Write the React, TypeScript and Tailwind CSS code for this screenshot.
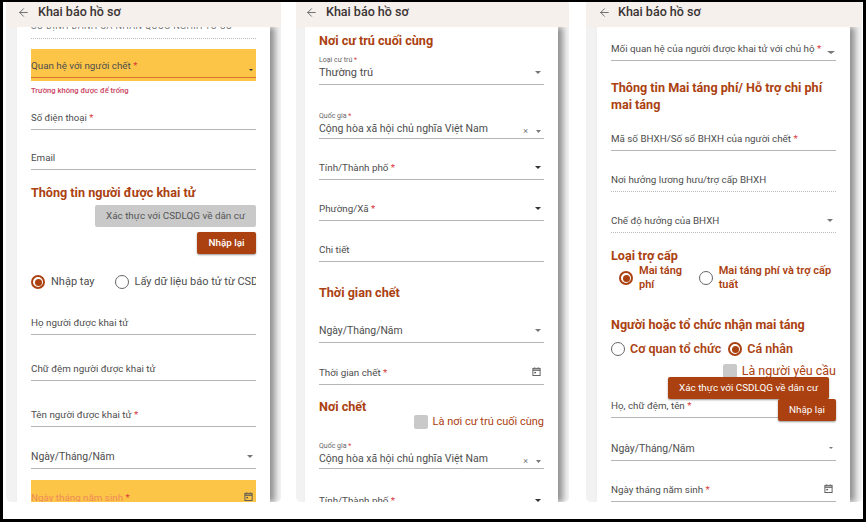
import { ArrowLeft } from 'lucide-react';
import type { ReactNode } from 'react';

const BRICK = 'text-[#ab4110]';
const LABEL = 'text-[#4d4d4d]';

function Star() {
  return <span className="text-[#d93a3a]"> *</span>;
}

function Caret({ dark = false, className = 'w-[6px] h-[3px] mb-[5px]' }: { dark?: boolean; className?: string }) {
  return (
    <svg viewBox="0 0 8 4" preserveAspectRatio="none" className={`${className} shrink-0`}>
      <path d="M0 0h8L4 4z" fill={dark ? '#333333' : '#777777'} />
    </svg>
  );
}

function CalendarIcon() {
  return (
    <svg viewBox="0 0 10 10" className="w-[9px] h-[9px] mb-[3px] shrink-0" fill="none" stroke="#555555">
      <rect x="1" y="1.5" width="8" height="8" strokeWidth="1" />
      <path d="M1 3.5h8" strokeWidth="1.4" />
      <path d="M3 0.5v1M7 0.5v1" strokeWidth="1" />
      <path d="M2.5 5.5h2v1.5h-2z" fill="#555555" strokeWidth="0" />
    </svg>
  );
}

function Field({
  children,
  small,
  right,
  top,
  height,
  dotted,
  filled,
  line,
  pad = 'pb-[5px]',
  textClass = 'text-[9.8px]',
}: {
  children: ReactNode;
  small?: ReactNode;
  right?: ReactNode;
  top: string;
  height: string;
  dotted?: boolean;
  filled?: boolean;
  line?: string;
  pad?: string;
  textClass?: string;
}) {
  return (
    <div
      className={`${top} ${height} ${pad} flex items-end justify-between pr-[3px] shrink-0 border-b ${
        dotted ? 'border-dotted border-[#bbbbbb]' : line ?? 'border-[#b5b5b5]'
      } ${filled ? 'bg-[#fdc548]' : ''}`}
    >
      <div className={`${textClass} ${LABEL} leading-[13px] whitespace-nowrap`}>
        {small && <div className="text-[7px] leading-[8px] mb-[2px] text-[#666666]">{small}</div>}
        {children}
      </div>
      {right}
    </div>
  );
}

function Radio({ on }: { on?: boolean }) {
  return (
    <span
      className={`w-[14px] h-[14px] rounded-full border shrink-0 flex items-center justify-center ${
        on ? 'border-[#ab4110] border-2' : 'border-[#666666]'
      }`}
    >
      {on && <span className="w-[7px] h-[7px] rounded-full bg-[#ab4110]" />}
    </span>
  );
}

function Heading({ children, top = '' }: { children: ReactNode; top?: string }) {
  return <h2 className={`${top} text-[12.6px] leading-[17px] font-bold ${BRICK} shrink-0`}>{children}</h2>;
}

function Panel({
  children,
  left,
  width,
  cardMargin,
  headerPad,
  headerGap,
}: {
  children: ReactNode;
  left: string;
  width: string;
  cardMargin: string;
  headerPad: string;
  headerGap: string;
}) {
  return (
    <section className={`${left} ${width} h-[500px] shrink-0 flex flex-col rounded-b-[5px] overflow-hidden bg-[#f2f2f2]`}>
      <header className={`${headerPad} ${headerGap} h-[25px] shrink-0 bg-[#f5f0ec] flex items-center pb-[4px] relative z-10`}>
        <ArrowLeft className="w-[13px] h-[13px] text-[#555555]" strokeWidth={1.5} />
        <span className="text-[12.5px] font-medium text-[#3a3333]">Khai báo hồ sơ</span>
      </header>
      <div className={`${cardMargin} flex-1 min-h-0 bg-white px-[14px] flex flex-col overflow-hidden shadow-[5px_0_6px_rgba(0,0,0,0.4)]`}>
        {children}
      </div>
    </section>
  );
}

function FirstPanel() {
  return (
    <Panel left="ml-[3px]" width="w-[275px]" cardMargin="mx-[11px]" headerPad="pl-[11px]" headerGap="gap-[8px]">
      <div className="h-[18px] -mt-[6px] shrink-0 border-b border-dotted border-[#bbbbbb] text-[9px] tracking-[0.4px] leading-[10px] text-[#777777] whitespace-nowrap overflow-hidden">
        SỐ ĐỊNH DANH CÁ NHÂN QUỐC NGHĨA TỬ SỐ
      </div>
      <div className="mt-[10px] pb-[3px] bg-[#fdc548] shrink-0">
        <Field
          top="mt-0"
          height="h-[29px]"
          line="border-[#d9742c]"
          right={<Caret className="w-[4px] h-[2px] mb-[1px]" dark />}
        >
          Quan hệ với người chết<Star />
        </Field>
      </div>
      <p className="mt-[5px] text-[7.6px] leading-[9px] font-medium text-[#c9405c] shrink-0">Trường không được để trống</p>
      <Field top="mt-[1px]" height="h-[34px]" textClass="text-[9.6px]">Số điện thoại<Star /></Field>
      <Field top="mt-[8px]" height="h-[32px]">Email</Field>
      <Heading top="mt-[14px]">Thông tin người được khai tử</Heading>
      <div className="mt-[4px] flex flex-col items-end gap-[5px] shrink-0">
        <button className="w-[161px] h-[22px] rounded-[2px] bg-[#c9c9c9] text-[9.9px] text-[#555555]">Xác thực với CSDLQG về dân cư</button>
        <button className="w-[59px] h-[22px] rounded-[2px] bg-[#ab4110] text-[9.9px] font-medium text-white shadow-[0_1px_2px_rgba(0,0,0,0.4)]">Nhập lại</button>
      </div>
      <div className="mt-[21px] flex items-center text-[11px] leading-[14px] text-[#4d4d4d] whitespace-nowrap overflow-hidden shrink-0">
        <Radio on />
        <span className="ml-[6px]">Nhập tay</span>
        <span className="ml-[20px]"><Radio /></span>
        <span className="ml-[6px]">Lấy dữ liệu báo tử từ CSDLHT</span>
      </div>
      <Field top="mt-[11px]" height="h-[35px]">Họ người được khai tử</Field>
      <Field top="mt-[10px]" height="h-[36px]">Chữ đệm người được khai tử</Field>
      <Field top="mt-[10px]" height="h-[36px]">Tên người được khai tử<Star /></Field>
      <Field top="mt-[8px]" height="h-[34px]" textClass="text-[10.4px]" right={<Caret />}>Ngày/Tháng/Năm</Field>
      <Field top="mt-[11px]" height="h-[30px]" filled line="border-[#d9742c]" right={<CalendarIcon />}>
        <span className="text-[#ef8a5a]">Ngày tháng năm sinh</span><Star />
      </Field>
    </Panel>
  );
}

function SecondPanel() {
  const clearAndCaret = (
    <div className="flex items-end gap-[8px] text-[9px] leading-[8px] text-[#777777]">
      <span>×</span>
      <Caret className="w-[5px] h-[3px] mb-[2px]" />
    </div>
  );
  return (
    <Panel left="ml-[15px]" width="w-[273px]" cardMargin="ml-[9px] mr-[11px]" headerPad="pl-[9px]" headerGap="gap-[8px]">
      <Heading top="mt-[5px]">Nơi cư trú cuối cùng</Heading>
      <Field top="mt-[6px]" height="h-[30px]" textClass="text-[11px]" small={<>Loại cư trú<Star /></>} right={<Caret />}>Thường trú</Field>
      <Field top="mt-[26px]" height="h-[28px]" pad="pb-[3px]" textClass="text-[10.5px]" small={<>Quốc gia<Star /></>} right={clearAndCaret}>Cộng hòa xã hội chủ nghĩa Việt Nam</Field>
      <Field top="mt-[12px]" height="h-[29px]" right={<Caret dark />}>Tính/Thành phố<Star /></Field>
      <Field top="mt-[12px]" height="h-[29px]" right={<Caret dark />}>Phường/Xã<Star /></Field>
      <Field top="mt-[12px]" height="h-[29px]">Chi tiết</Field>
      <Heading top="mt-[22px]">Thời gian chết</Heading>
      <Field top="mt-[12px]" height="h-[30px]" textClass="text-[10.4px]" right={<Caret />}>Ngày/Tháng/Năm</Field>
      <Field top="mt-[12px]" height="h-[30px]" right={<CalendarIcon />}>Thời gian chết<Star /></Field>
      <Heading top="mt-[13px]">Nơi chết</Heading>
      <div className="h-[14px] flex justify-end items-center gap-[5px] text-[11px] text-[#ab4110] shrink-0">
        <span className="w-[14px] h-[14px] rounded-[2px] bg-[#c9c9c9]" />
        Là nơi cư trú cuối cùng
      </div>
      <Field top="mt-[12px]" height="h-[28px]" pad="pb-[3px]" textClass="text-[10.5px]" small={<>Quốc gia<Star /></>} right={clearAndCaret}>Cộng hòa xã hội chủ nghĩa Việt Nam</Field>
      <div className="mt-[25px] flex justify-between pr-[3px] items-center text-[9.8px] text-[#4d4d4d] leading-[13px] shrink-0">
        <span>Tính/Thành phố<Star /></span>
        <Caret dark className="w-[6px] h-[3px]" />
      </div>
    </Panel>
  );
}

function ThirdPanel() {
  return (
    <Panel left="ml-[17px]" width="w-[276px]" cardMargin="ml-[11px] mr-[12px]" headerPad="pl-[12px]" headerGap="gap-[7px]">
      <Field top="mt-[6px]" height="h-[28px]" right={<Caret className="w-[8px] h-[3px] mb-[1px] -mr-[2px]" />}>Mối quan hệ của người được khai tử với chủ hộ<Star /></Field>
      <Heading top="mt-[18px]">Thông tin Mai táng phí/ Hỗ trợ chi phí mai táng</Heading>
      <Field top="mt-[8px]" height="h-[30px]">Mã số BHXH/Số sổ BHXH của người chết<Star /></Field>
      <Field top="mt-[11px]" height="h-[30px]" dotted>Nơi hưởng lương hưu/trợ cấp BHXH</Field>
      <Field top="mt-[11px]" height="h-[30px]" dotted right={<Caret />}>Chế độ hưởng của BHXH</Field>
      <Heading top="mt-[14px]">Loại trợ cấp</Heading>
      <div className={`flex items-center text-[11px] font-semibold leading-[14px] ${BRICK} shrink-0 pl-[8px]`}>
        <Radio on />
        <span className="ml-[6px] w-[60px]">Mai táng phí</span>
        <Radio />
        <span className="ml-[6px] w-[118px]">Mai táng phí và trợ cấp tuất</span>
      </div>
      <Heading top="mt-[24px]">Người hoặc tổ chức nhận mai táng</Heading>
      <div className={`mt-[9px] flex items-center text-[12.5px] leading-[14px] font-semibold ${BRICK} shrink-0`}>
        <Radio />
        <span className="ml-[5px]">Cơ quan tổ chức</span>
        <span className="ml-[7px]"><Radio on /></span>
        <span className="ml-[5px]">Cá nhân</span>
      </div>
      <div className="mt-[8px] flex justify-end items-center gap-[5px] text-[12.5px] text-[#ab4110] shrink-0 leading-[14px]">
        <span className="w-[14px] h-[14px] rounded-[2px] bg-[#c9c9c9]" />
        Là người yêu cầu
      </div>
      <div className="relative shrink-0">
        <button className="absolute right-[7px] top-[-1px] z-10 w-[161px] h-[22px] rounded-[2px] bg-[#ab4110] text-[9.9px] text-white shadow-[0_1px_2px_rgba(0,0,0,0.4)]">Xác thực với CSDLQG về dân cư</button>
        <button className="absolute right-0 top-[21px] z-10 w-[58px] h-[22px] rounded-[2px] bg-[#ab4110] text-[9.9px] text-white shadow-[0_1px_2px_rgba(0,0,0,0.4)]">Nhập lại</button>
        <Field top="mt-0" height="h-[40px]">Họ, chữ đệm, tên<Star /></Field>
      </div>
      <Field top="mt-[13px]" height="h-[30px]" textClass="text-[10.4px]" right={<Caret className="w-[4px] h-[2px] mb-[6px]" />}>Ngày/Tháng/Năm</Field>
      <Field top="mt-[11px]" height="h-[30px]" right={<CalendarIcon />}>Ngày tháng năm sinh<Star /></Field>
    </Panel>
  );
}

export default function App() {
  return (
    <div className="w-[866px] h-[524px] bg-white overflow-hidden font-['Roboto',sans-serif]">
      <div className="h-[522px] border-t-2 border-b-[3px] border-l-[3px] border-r-[3px] border-black flex items-start">
        <FirstPanel />
        <SecondPanel />
        <ThirdPanel />
      </div>
    </div>
  );
}
